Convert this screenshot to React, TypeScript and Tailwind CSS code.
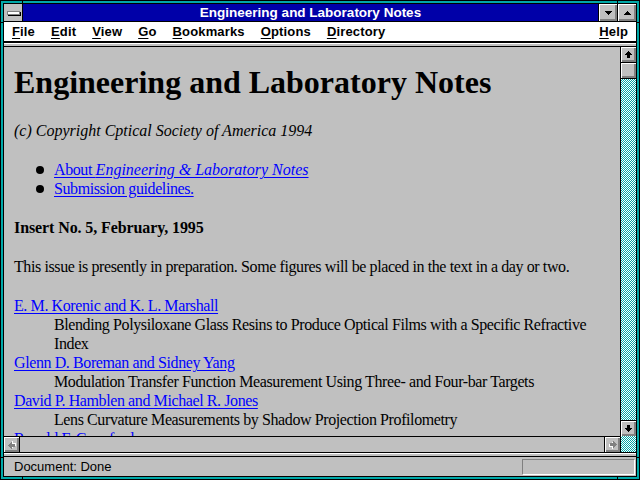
import React from "react";

// little pixel arrows, drawn on a 7x7 grid
const ArrowUp = ({ className = "" }: { className?: string }) => (
  <svg width="7" height="7" viewBox="0 0 7 7" shapeRendering="crispEdges" className={className}>
    <path d="M3 0h1v1h1v1h1v1h1v1H5v3H2V4H0V3h1V2h1V1h1z" fill="currentColor" />
  </svg>
);

// disabled (grey, embossed) arrow for the horizontal bar
const GreyArrow = ({ className = "" }: { className?: string }) => (
  <svg width="8" height="8" viewBox="0 0 8 8" shapeRendering="crispEdges" className={className}>
    <path transform="translate(1 1)" d="M3 0h1v1h1v1h1v1h1v1H5v3H2V4H0V3h1V2h1V1h1z" fill="#ffffff" />
    <path d="M3 0h1v1h1v1h1v1h1v1H5v3H2V4H0V3h1V2h1V1h1z" fill="#808080" />
  </svg>
);

const Tri = ({ up = false }: { up?: boolean }) => (
  <svg width="7" height="4" viewBox="0 0 7 4" shapeRendering="crispEdges" className={up ? "rotate-180" : ""}>
    <path d="M0 0h7v1H6v1H5v1H4v1H3V3H2V2H1V1H0z" fill="#000" />
  </svg>
);

const raised =
  "bg-[#c0c0c0] shadow-[inset_1px_1px_0_#ffffff,inset_-1px_-1px_0_#808080,inset_-2px_-2px_0_#808080]";
const dither =
  "bg-[repeating-conic-gradient(#00a8a8_0%_25%,#ffffff_0%_50%)] bg-[length:2px_2px]";

const MenuItem = ({ label, className = "" }: { label: string; className?: string }) => (
  <span className={"px-2 " + className}>
    <span className="underline underline-offset-[2px]">{label[0]}</span>
    {label.slice(1)}
  </span>
);

const Link = ({ children }: { children: React.ReactNode }) => (
  <a className="text-[#0000ff] underline underline-offset-[2px]">{children}</a>
);

const App = () => {
  const menus = ["File", "Edit", "View", "Go", "Bookmarks", "Options", "Directory"];

  return (
    <div className="relative w-[640px] h-[480px] border border-black bg-[#00a8a8] p-[2px] font-['Liberation_Sans',Arial,sans-serif]">
      {/* frame notches */}
      <div className="absolute left-[21px] top-0 w-px h-[3px] bg-black" />
      <div className="absolute left-[616px] top-0 w-px h-[3px] bg-black" />
      <div className="absolute left-[21px] bottom-0 w-px h-[3px] bg-black" />
      <div className="absolute left-[616px] bottom-0 w-px h-[3px] bg-black" />
      <div className="absolute left-0 top-[21px] w-[3px] h-px bg-black" />
      <div className="absolute left-0 top-[456px] w-[3px] h-px bg-black" />
      <div className="absolute right-0 top-[21px] w-[3px] h-px bg-black" />
      <div className="absolute right-0 top-[456px] w-[3px] h-px bg-black" />

      <div className="h-full border border-black flex flex-col bg-[#c0c0c0]">
        {/* title bar */}
        <div className="h-[18px] flex border-b border-black">
          <div className="w-[19px] border-r border-black bg-[#c0c0c0] flex items-center justify-center">
            <div className="w-[13px] h-[4px] bg-white border border-[#808080] shadow-[1px_1px_0_#000]" />
          </div>
          <div className="flex-1 bg-[#0000a8] flex items-center justify-center text-white font-bold text-[13.5px] leading-none">
            Engineering and Laboratory Notes
          </div>
          <div className={"w-[19px] border-l border-black flex items-center justify-center " + raised}>
            <Tri />
          </div>
          <div className={"w-[19px] border-l border-black flex items-center justify-center " + raised}>
            <Tri up />
          </div>
        </div>

        {/* menu bar */}
        <div className="h-[19px] bg-white flex items-center text-[13px] font-bold tracking-[0.15px] text-black">
          {menus.map((m) => (
            <MenuItem key={m} label={m} />
          ))}
          <MenuItem label="Help" className="ml-auto" />
        </div>
        <div className="h-[6px] border-t-2 border-b border-black bg-[#c0c0c0] shadow-[inset_0_1px_0_#ffffff]" />

        {/* page + scrollbars */}
        <div className="flex-1 flex flex-col">
          <div className="h-[389px] flex">
            <div className="flex-1 overflow-hidden bg-[#c0c0c0] pt-[17px] pl-[10px] pr-[10px] text-black text-[16px] leading-[19px] tracking-[-0.4px] font-['Liberation_Serif','Times_New_Roman',serif]">
              <h1 className="text-[32px] leading-[37px] font-bold tracking-normal">Engineering and Laboratory Notes</h1>
              <p className="mt-[20px] italic tracking-normal">(c) Copyright Cptical Society of America 1994</p>
              <ul className="mt-[20px] pl-[22px]">
                <li className="flex items-center gap-[10px]">
                  <span className="w-[8px] h-[8px] rounded-full bg-black" />
                  <Link>
                    About <i className="tracking-normal">Engineering &amp; Laboratory Notes</i>
                  </Link>
                </li>
                <li className="flex items-center gap-[10px]">
                  <span className="w-[8px] h-[8px] rounded-full bg-black" />
                  <Link>Submission guidelines.</Link>
                </li>
              </ul>
              <p className="mt-[20px] font-bold tracking-[-0.1px]">Insert No. 5, February, 1995</p>
              <p className="mt-[20px]">
                This issue is presently in preparation. Some figures will be placed in the text in a day or two.
              </p>
              <dl className="mt-[20px]">
                <dt>
                  <Link>E. M. Korenic and K. L. Marshall</Link>
                </dt>
                <dd className="pl-[40px]">
                  Blending Polysiloxane Glass Resins to Produce Optical Films with a Specific Refractive Index
                </dd>
                <dt>
                  <Link>Glenn D. Boreman and Sidney Yang</Link>
                </dt>
                <dd className="pl-[40px]">Modulation Transfer Function Measurement Using Three- and Four-bar Targets</dd>
                <dt>
                  <Link>David P. Hamblen and Michael R. Jones</Link>
                </dt>
                <dd className="pl-[40px]">Lens Curvature Measurements by Shadow Projection Profilometry</dd>
                <dt>
                  <Link>Ronald F. Crawford</Link>
                </dt>
              </dl>
            </div>

            {/* vertical scrollbar */}
            <div className="w-[16px] border-l border-black flex flex-col">
              <div className={"h-[16px] border-b border-black flex items-center justify-center " + raised}>
                <ArrowUp className="text-black" />
              </div>
              <div className={"h-[16px] border-b border-black " + raised} />
              <div className={"flex-1 " + dither} />
              <div className={"h-[16px] border-t border-black flex items-center justify-center " + raised}>
                <ArrowUp className="text-black rotate-180" />
              </div>
            </div>
          </div>

          {/* horizontal scrollbar */}
          <div className="h-[16px] flex">
            <div className="flex-1 flex border-t border-black">
              <div className={"w-[16px] border-r border-black flex items-center justify-center " + raised}>
                <GreyArrow className="-rotate-90" />
              </div>
              <div className="flex-1 bg-[#c0c0c0]" />
              <div className={"w-[16px] border-l border-black flex items-center justify-center " + raised}>
                <GreyArrow className="rotate-90" />
              </div>
            </div>
            <div className={"w-[16px] border-l border-black " + dither} />
          </div>
          <div className="h-[5px] border-t border-b border-black bg-[#c0c0c0] shadow-[inset_0_1px_0_#ffffff]" />

          {/* status bar */}
          <div className="h-[19px] flex items-start pt-[2px] pr-px bg-[#c0c0c0]">
            <span className="pl-[10px] text-[13px] leading-[16px] text-black">Document: Done</span>
            <div className="ml-auto w-[113px] h-[16px] border-t border-l border-[#808080] border-b border-r border-b-white border-r-white" />
          </div>
        </div>
      </div>
    </div>
  );
};

export default App;
